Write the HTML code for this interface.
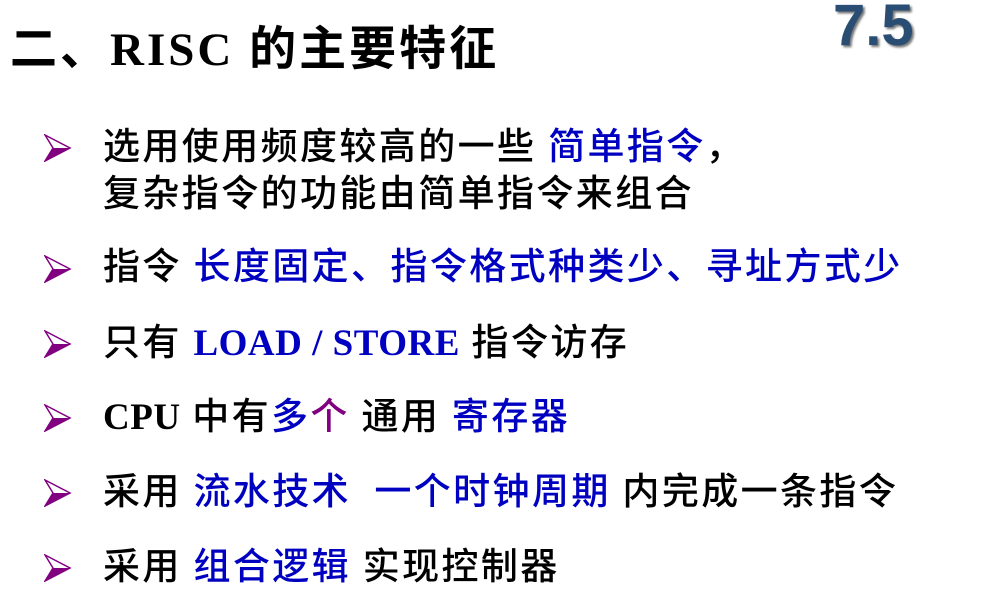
<!DOCTYPE html>
<html><head><meta charset="utf-8"><style>
body{margin:0;width:981px;height:611px;background:#fff;position:relative;overflow:hidden;font-family:"Liberation Serif","Noto Sans CJK SC",serif;}
.t{position:absolute;left:10px;top:10px;font-size:47px;font-weight:bold;color:#000;white-space:nowrap;letter-spacing:3px;font-family:"Liberation Serif","Noto Sans CJK SC",serif}
.n{position:absolute;left:833px;top:-8px;font-family:"Liberation Sans",sans-serif;font-size:58px;font-weight:bold;color:#2a4d74;text-shadow:2px 2px 2px #777;letter-spacing:0px}
.l{position:absolute;left:103px;font-size:37px;letter-spacing:2.4px;white-space:nowrap;color:#000;font-family:"Liberation Serif","Noto Sans CJK SC",serif;font-weight:500;line-height:40px}
.b{color:#0000c0}
.p{color:#800080}
.e{font-weight:bold;letter-spacing:0.5px}
svg{position:absolute;left:44px}
</style></head><body>
<div class="t">二、RISC 的主要特征</div>
<div class="n">7.5</div>
<svg width="28" height="28" style="top:134px" viewBox="0 0 28 28"><polygon points="1,1 26,14 1,27 9,14" fill="#fff" stroke="#800080" stroke-width="1.5"/><polygon points="9,14 26,14 1,27" fill="#800080"/></svg>
<div class="l" style="top:128px">选用使用频度较高的一些 <span class="b">简单指令</span>，</div>
<div class="l" style="top:175px">复杂指令的功能由简单指令来组合</div>
<svg width="28" height="28" style="top:255px" viewBox="0 0 28 28"><polygon points="1,1 26,14 1,27 9,14" fill="#fff" stroke="#800080" stroke-width="1.5"/><polygon points="9,14 26,14 1,27" fill="#800080"/></svg>
<div class="l" style="top:248px">指令 <span class="b">长度固定、指令格式种类少、寻址方式少</span></div>
<svg width="28" height="28" style="top:330px" viewBox="0 0 28 28"><polygon points="1,1 26,14 1,27 9,14" fill="#fff" stroke="#800080" stroke-width="1.5"/><polygon points="9,14 26,14 1,27" fill="#800080"/></svg>
<div class="l" style="top:324px">只有 <span class="b e">LOAD / STORE</span> 指令访存</div>
<svg width="28" height="28" style="top:404px" viewBox="0 0 28 28"><polygon points="1,1 26,14 1,27 9,14" fill="#fff" stroke="#800080" stroke-width="1.5"/><polygon points="9,14 26,14 1,27" fill="#800080"/></svg>
<div class="l" style="top:398px"><span class="e">CPU</span> 中有<span class="b">多</span><span class="p">个</span> 通用 <span class="b">寄存器</span></div>
<svg width="28" height="28" style="top:479px" viewBox="0 0 28 28"><polygon points="1,1 26,14 1,27 9,14" fill="#fff" stroke="#800080" stroke-width="1.5"/><polygon points="9,14 26,14 1,27" fill="#800080"/></svg>
<div class="l" style="top:473px">采用 <span class="b">流水技术&nbsp; 一个时钟周期</span> 内完成一条指令</div>
<svg width="28" height="28" style="top:554px" viewBox="0 0 28 28"><polygon points="1,1 26,14 1,27 9,14" fill="#fff" stroke="#800080" stroke-width="1.5"/><polygon points="9,14 26,14 1,27" fill="#800080"/></svg>
<div class="l" style="top:548px">采用 <span class="b">组合逻辑</span> 实现控制器</div>
</body></html>
